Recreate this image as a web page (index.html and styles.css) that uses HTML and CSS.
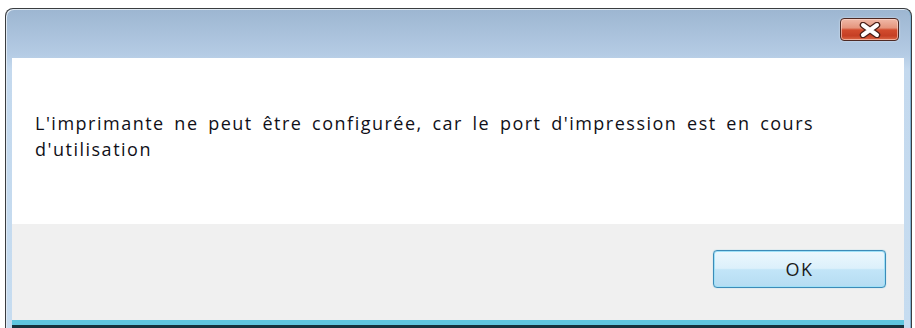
FILE: index.html
```html
<!DOCTYPE html>
<html lang="fr">
<head>
<meta charset="utf-8">
<title>Erreur</title>
<link rel="stylesheet" href="styles.css">
</head>
<body>
<div class="window">
  <div class="titlebar">
    <button class="close" aria-label="Fermer">
      <svg width="24" height="16" viewBox="0 0 24 16">
        <path d="M5 3 L19 13 M19 3 L5 13" stroke="#4a2019" stroke-width="6.5" stroke-linecap="round"/>
        <path d="M5 3 L19 13 M19 3 L5 13" stroke="#ffffff" stroke-width="4" stroke-linecap="round"/>
      </svg>
    </button>
  </div>
  <div class="client">
    <div class="message">
      <p>L'imprimante ne peut être configurée, car le port d'impression est en cours d'utilisation</p>
    </div>
    <div class="footer">
      <button class="ok">OK</button>
    </div>
  </div>
</div>
</body>
</html>
```
FILE: styles.css
```css
html, body {
  margin: 0;
  padding: 0;
  background: #ffffff;
}
body {
  width: 915px;
  height: 328px;
  overflow: hidden;
}
.window {
  box-sizing: border-box;
  margin: 8px 0 0 5px;
  width: 907px;
  height: 320px;
  border: 1px solid #3a3d40;
  border-bottom: 0;
  border-radius: 8px 8px 0 0;
  background: linear-gradient(to bottom, #9db6d1 0, #b4cbe4 45px, #c4d9ee 60px, #c6dcf0 100%);
  box-shadow: inset 1px 1px 0 #dfe9f3, inset -1px 0 0 #7fb0d0;
  display: flex;
  flex-direction: column;
  padding: 0 7px 0 6px;
}
.titlebar {
  height: 49px;
  flex: none;
  display: flex;
  justify-content: flex-end;
  align-items: flex-start;
  padding: 9px 5px 0 0;
  box-sizing: border-box;
}
.close {
  width: 59px;
  height: 23px;
  padding: 0;
  border: 1px solid #4e2a24;
  border-radius: 4px;
  background: linear-gradient(to bottom, #f0b9a8 0%, #e5957d 42%, #d24c2e 52%, #c53f24 80%, #dc6a48 100%);
  box-shadow: inset 0 0 0 1px rgba(255,220,210,0.6), 0 0 2px rgba(255,255,255,0.7);
  display: flex;
  align-items: center;
  justify-content: center;
}
.client {
  flex: 1;
  display: flex;
  flex-direction: column;
  border-bottom: 5px solid #5fc6df;
  box-shadow: 0 3px 0 #16323d;
  margin-bottom: 3px;
}
.message {
  background: #ffffff;
  height: 166px;
  flex: none;
  box-sizing: border-box;
  padding: 52px 20px 0 23px;
}
.message p {
  margin: 0;
  font-family: "Open Sans", "Noto Sans", sans-serif;
  font-size: 18px;
  font-weight: 500;
  line-height: 26px;
  letter-spacing: 1.5px;
  word-spacing: 3.5px;
  color: #101018;
}
.footer {
  flex: 1;
  background: #f0f0f0;
  display: flex;
  justify-content: flex-end;
  align-items: flex-start;
  padding: 26px 18px 0 0;
}
.ok {
  width: 173px;
  height: 38px;
  border: 1px solid #3c8bb8;
  border-radius: 4px;
  background: linear-gradient(to bottom, #ecf7fd 0%, #dcf0fb 48%, #c2e5f8 52%, #b5dcf2 100%);
  box-shadow: inset 0 0 0 1px #9fe0f7, 0 0 1px #5bc0e0;
  font-family: "Open Sans", "Noto Sans", sans-serif;
  font-size: 18px;
  font-weight: 500;
  letter-spacing: 1.5px;
  color: #1c1c1c;
  padding: 0;
}
```
